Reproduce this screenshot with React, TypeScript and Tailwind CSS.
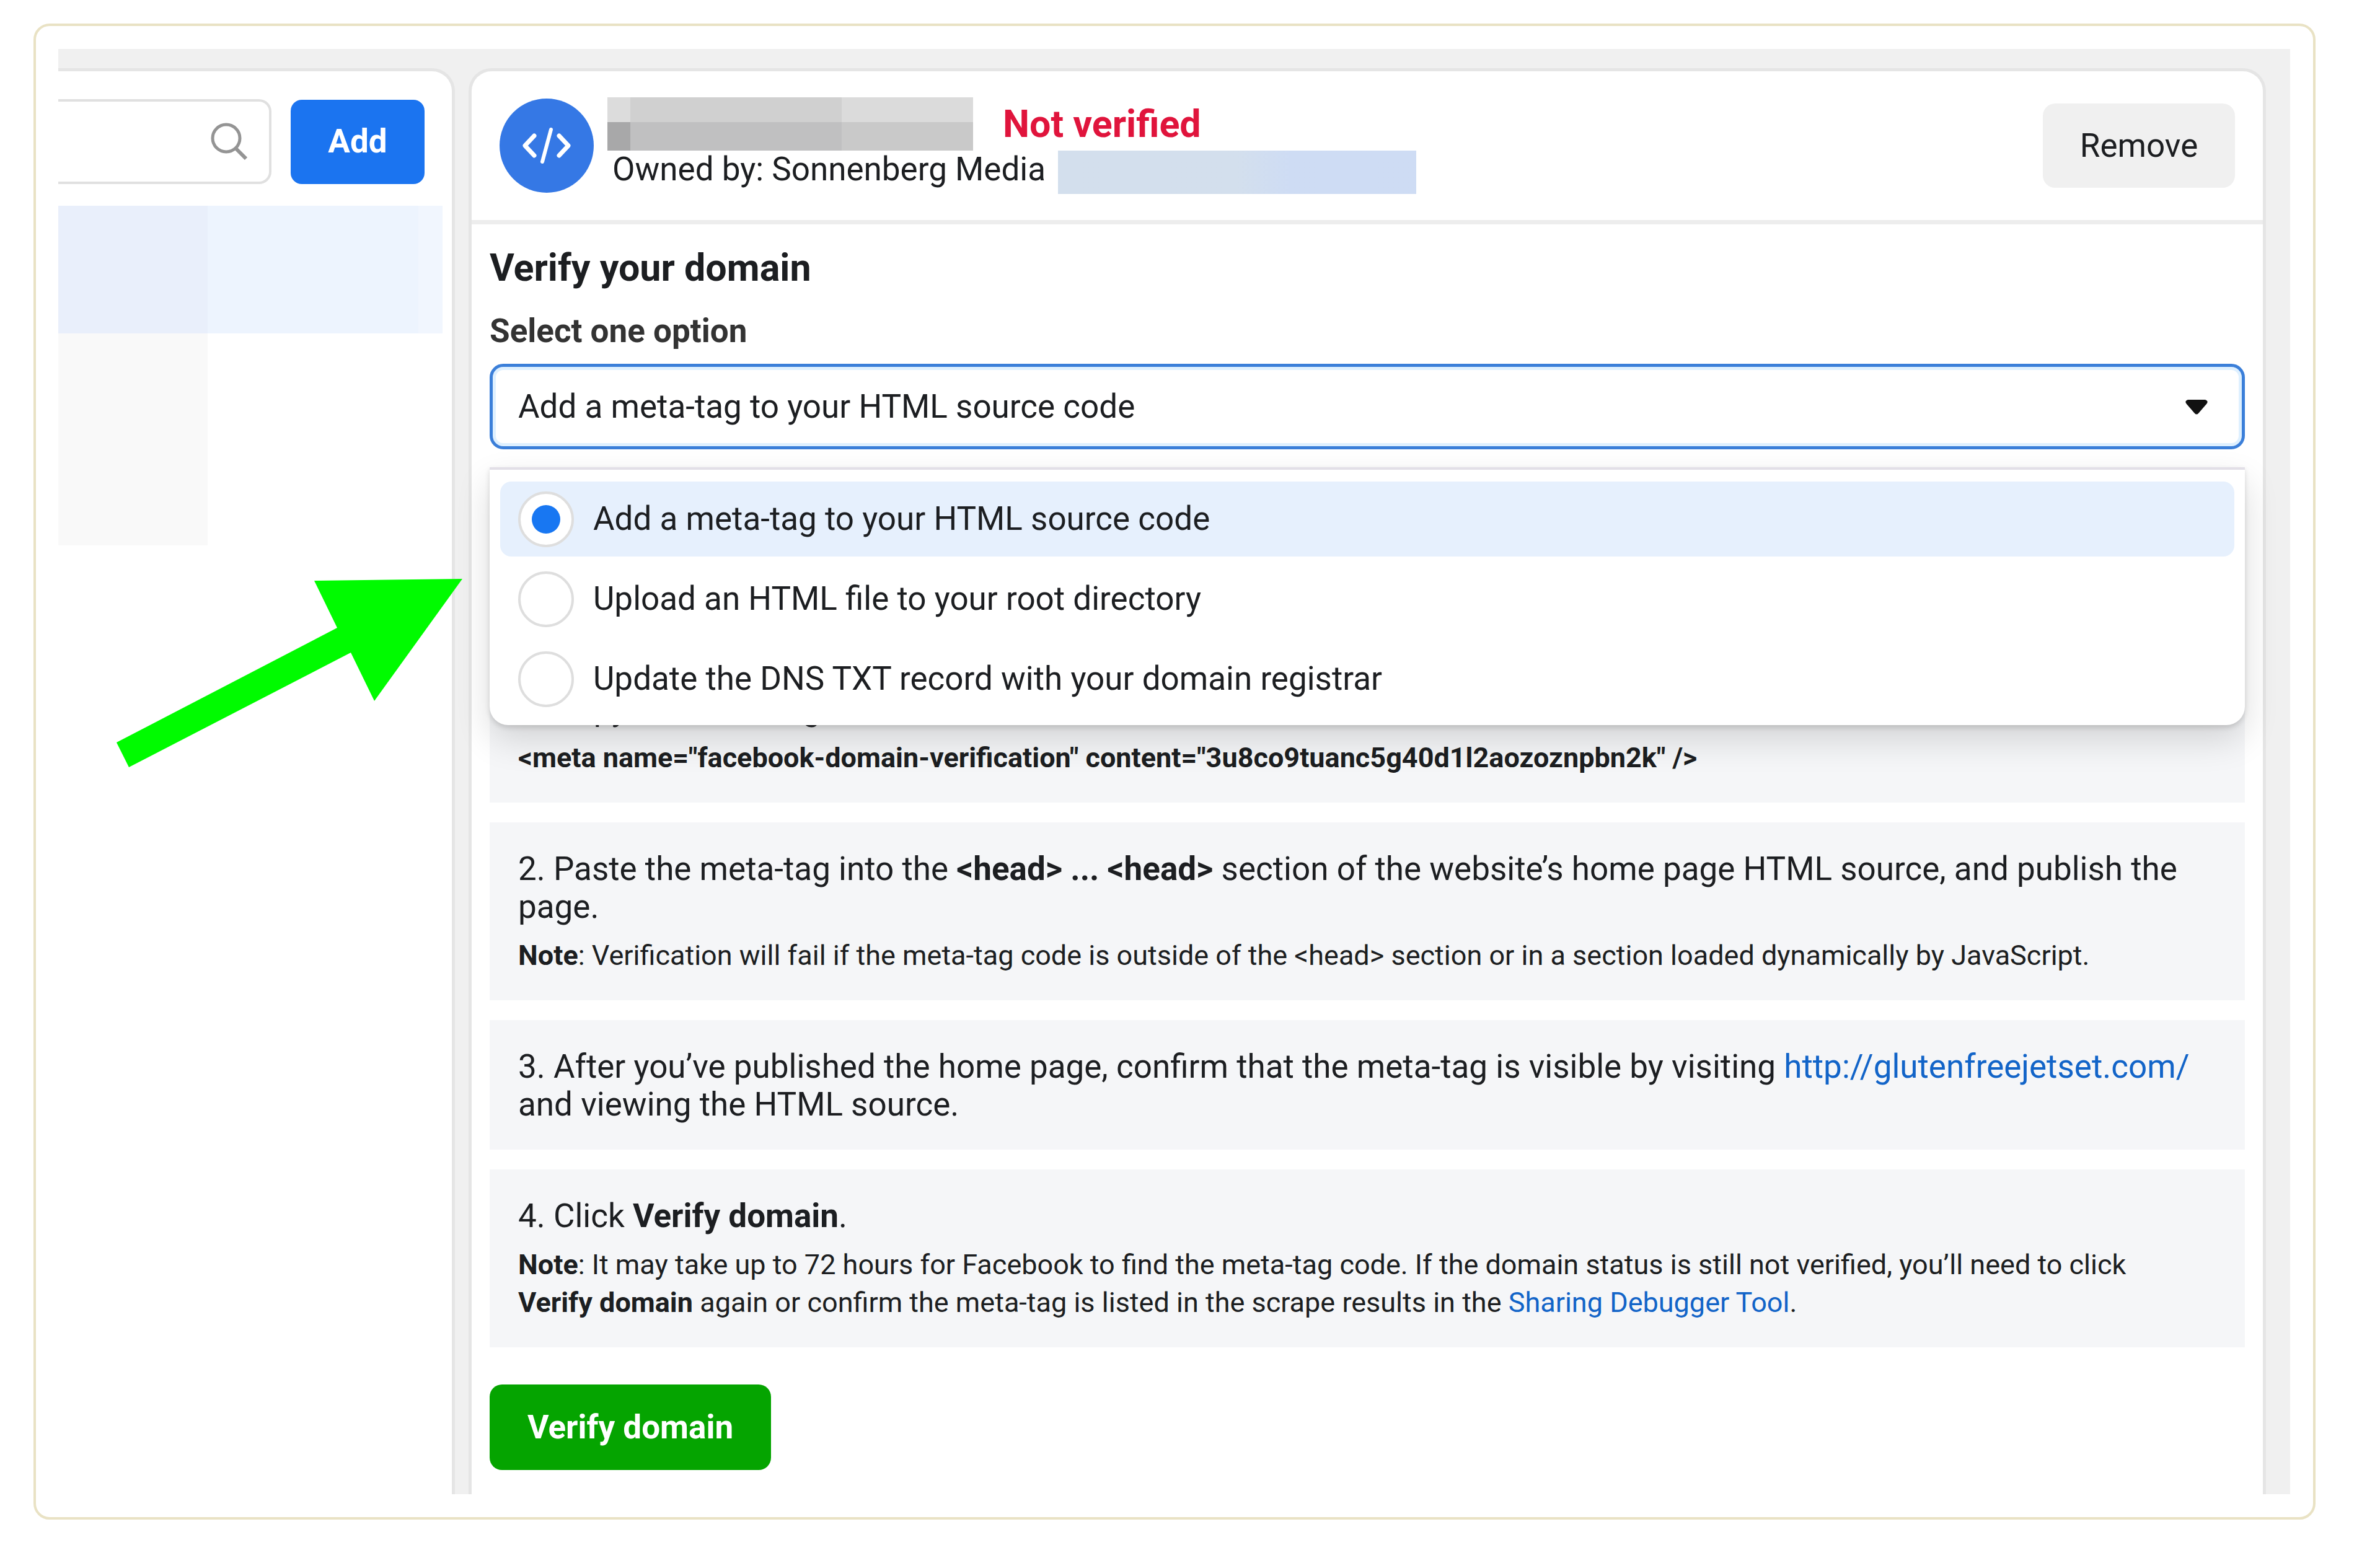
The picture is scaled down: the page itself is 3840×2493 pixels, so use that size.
import { useState } from "react";
import type { ReactNode } from "react";

const OPTIONS = [
  { id: "meta", label: "Add a meta-tag to your HTML source code" },
  { id: "file", label: "Upload an HTML file to your root directory" },
  { id: "dns", label: "Update the DNS TXT record with your domain registrar" },
];

function SearchIcon() {
  return (
    <svg viewBox="0 0 60 60" className="h-[60px] w-[60px]" fill="none" stroke="#949494" strokeWidth="5">
      <circle cx="25" cy="25" r="22" />
      <path d="M40 41L57 58" strokeWidth="6" />
    </svg>
  );
}

function CodeIcon() {
  return (
    <svg
      viewBox="0 0 80 60"
      className="h-[60px] w-[80px]"
      fill="none"
      stroke="#fff"
      strokeWidth="7"
      strokeLinecap="round"
      strokeLinejoin="round"
    >
      <path d="M20 14L5 30L20 46" />
      <path d="M60 14L75 30L60 46" />
      <path d="M47 4L33 56" strokeWidth="6" />
    </svg>
  );
}

/** Domain list column, cut off on its left side. */
function DomainList() {
  return (
    <aside className="w-[635px] shrink-0 rounded-tr-[32px] bg-white pt-[45px] shadow-[0_0_0_5px_#e5e5e5]">
      <div className="flex items-center gap-[31px] pr-[44px]">
        <div className="relative flex-1">
          <input
            type="text"
            aria-label="Search domains"
            className="h-[137px] w-full rounded-r-[20px] border-4 border-l-0 border-[#e0e0e0] bg-white pr-28 outline-none"
          />
          <span className="pointer-events-none absolute top-[38px] right-[38px]">
            <SearchIcon />
          </span>
        </div>
        <button
          type="button"
          className="h-[136px] w-[216px] rounded-[18px] bg-[#1b74f0] font-bold text-white"
        >
          Add
        </button>
      </div>
      <div className="mt-[35px] flex h-[206px]">
        <div className="w-[241px] bg-[#e9effb]" />
        <div className="w-[340px] bg-[#edf4fe]" />
        <div className="w-[39px] bg-[#f1f6fe]" />
      </div>
      <div className="h-[342px] w-[241px] bg-[#f9f9f9]" />
    </aside>
  );
}

function DomainHeader() {
  return (
    <header className="flex h-[247px] items-center border-b-[7px] border-[#ededed] pr-[45px] pl-[45px]">
      <div className="flex h-[152px] w-[152px] shrink-0 items-center justify-center rounded-full bg-[#3578e5]">
        <CodeIcon />
      </div>
      <div className="ml-[22px]">
        <div className="flex h-[86px] items-center">
          <div className="grid h-full grid-cols-[37px_341px_212px] grid-rows-[40px_46px]">
            <div className="bg-[#dcdcdc]" />
            <div className="bg-[#d0d0d0]" />
            <div className="bg-[#dbdbdb]" />
            <div className="bg-[#a8a8a9]" />
            <div className="bg-[#c0c0c1]" />
            <div className="bg-[#c9c9c9]" />
          </div>
          <span className="ml-[48px] text-[61px] leading-[68px] font-bold text-[#e0143c]">
            Not verified
          </span>
        </div>
        <div className="flex h-[70px] items-start pl-[8px]">
          <span>Owned by: Sonnenberg Media</span>
          <div className="ml-[20px] h-full w-[578px] bg-linear-to-r from-[#d3dfed] from-50% to-[#cedcf4] to-65%" />
        </div>
      </div>
      <button type="button" className="ml-auto h-[136px] w-[310px] rounded-[20px] bg-[#f0f0f0]">
        Remove
      </button>
    </header>
  );
}

function MethodPicker({ value, onChange }: { value: string; onChange: (id: string) => void }) {
  return (
    <div className="relative">
      <select
        id="method"
        value={value}
        onChange={(e) => onChange(e.target.value)}
        className="block h-[138px] w-full appearance-none rounded-[22px] border-[5px] border-[#3b7fd9] bg-white pr-[120px] pl-[41px] shadow-[inset_0_0_0_5px_#def0ff] outline-none"
      >
        {OPTIONS.map((o) => (
          <option key={o.id} value={o.id}>
            {o.label}
          </option>
        ))}
      </select>
      <svg
        viewBox="0 0 36 24"
        className="pointer-events-none absolute top-[58px] right-[60px] h-[24px] w-[36px]"
        fill="#111"
      >
        <path d="M4 0H32Q38 2 34 7L21 22Q18 25 15 22L2 7Q-2 2 4 0Z" />
      </svg>

      <div
        role="radiogroup"
        aria-label="Verification method"
        className="absolute inset-x-0 top-[167px] z-10 flex flex-col gap-[8px] rounded-b-[30px] border-t-[4px] border-[#e2dfe7] bg-white px-[17px] pt-[19px] pb-[14px] shadow-[0_4px_8px_rgba(0,0,0,0.14),0_24px_56px_rgba(0,0,0,0.14)]"
      >
        {OPTIONS.map((o) => (
          <label
            key={o.id}
            className={`flex h-[121px] items-center rounded-[18px] px-[29px] ${
              o.id === value ? "bg-[#e6f0fd]" : ""
            }`}
          >
            <input
              type="radio"
              name="verification"
              checked={o.id === value}
              onChange={() => onChange(o.id)}
              className="mr-[31px] grid h-[90px] w-[90px] shrink-0 appearance-none place-items-center rounded-full border-4 border-[#dedede] bg-white before:h-[46px] before:w-[46px] before:rounded-full checked:before:bg-[#1877f2]"
            />
            {o.label}
          </label>
        ))}
      </div>
    </div>
  );
}

function Step({ children, note }: { children: ReactNode; note?: ReactNode }) {
  return (
    <li className="bg-[#f5f6f8] pt-[45px] pr-[80px] pb-[42px] pl-[46px]">
      <p>{children}</p>
      {note && <p className="mt-[17px] text-[45px]">{note}</p>}
    </li>
  );
}

export default function App() {
  const [method, setMethod] = useState("meta");

  return (
    <div className="min-h-screen bg-white px-[54px] pt-[38px] pb-[41px] font-[Roboto,sans-serif] text-[53px] leading-[61px] text-[#1c1e21]">
      <div className="mr-[50px] rounded-[26px] border-4 border-[#e9e2c4] p-[37px] pl-[36px]">
        <div className="relative flex gap-[32px] overflow-hidden bg-[#f0f0f0] pt-[36px] pr-[44px]">
          <DomainList />

          <main className="min-w-0 flex-1 rounded-t-[32px] bg-white shadow-[0_0_0_5px_#e5e5e5]">
            <DomainHeader />
            <div className="px-[29px] pb-[39px]">
              <h1 className="pt-[36px] text-[61px] leading-[68px] font-bold">Verify your domain</h1>
              <label htmlFor="method" className="mt-[38px] mb-[22px] block font-bold text-[#333]">
                Select one option
              </label>
              <MethodPicker value={method} onChange={setMethod} />

              <ol className="mt-[344px] flex flex-col gap-[32px]">
                <Step
                  note={
                    <b>
                      &lt;meta name="facebook-domain-verification" content="3u8co9tuanc5g40d1l2aozoznpbn2k" /&gt;
                    </b>
                  }
                >
                  1. Copy the meta-tag
                </Step>
                <Step
                  note={
                    <>
                      <b>Note</b>: Verification will fail if the meta-tag code is outside of the &lt;head&gt;
                      section or in a section loaded dynamically by JavaScript.
                    </>
                  }
                >
                  2. Paste the meta-tag into the <b>&lt;head&gt; ... &lt;head&gt;</b> section of the website’s
                  home page HTML source, and publish the page.
                </Step>
                <Step>
                  3. After you’ve published the home page, confirm that the meta-tag is visible by visiting{" "}
                  <a href="http://glutenfreejetset.com/" className="text-[#1264c8]">
                    http://glutenfreejetset.com/
                  </a>{" "}
                  and viewing the HTML source.
                </Step>
                <Step
                  note={
                    <>
                      <b>Note</b>: It may take up to 72 hours for Facebook to find the meta-tag code. If the
                      domain status is still not verified, you’ll need to click <b>Verify domain</b> again or
                      confirm the meta-tag is listed in the scrape results in the{" "}
                      <a href="#debugger" className="text-[#1264c8]">
                        Sharing Debugger Tool
                      </a>
                      .
                    </>
                  }
                >
                  4. Click <b>Verify domain</b>.
                </Step>
              </ol>

              <button
                type="button"
                className="mt-[60px] block h-[138px] rounded-[20px] bg-[#05a400] px-[61px] font-bold text-white"
              >
                Verify domain
              </button>
            </div>
          </main>

          {/* callout arrow pointing at the open menu */}
          <svg
            viewBox="0 0 560 306"
            className="pointer-events-none absolute top-[855px] left-[93px] z-20 h-[306px] w-[560px]"
            fill="#00fb00"
          >
            <path d="M559 0L320 3L357 79L1 264L21 304L379 119L417 197Z" />
          </svg>
        </div>
      </div>
    </div>
  );
}
